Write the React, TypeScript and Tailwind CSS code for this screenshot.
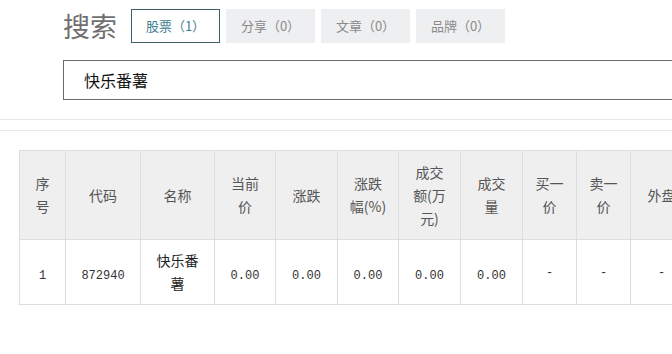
const cjk = { fontFamily: '"Noto Sans CJK SC", "Noto Sans", sans-serif' }
const mono = { fontFamily: '"Liberation Mono", "Noto Sans CJK SC", monospace' }

const tabs = [
  { label: '股票（1）', active: true },
  { label: '分享（0）', active: false },
  { label: '文章（0）', active: false },
  { label: '品牌（0）', active: false },
]

const cols = [46, 75, 74, 61, 62, 61, 62, 62, 54, 54, 62]

const heads: string[][] = [
  ['序', '号'],
  ['代码'],
  ['名称'],
  ['当前', '价'],
  ['涨跌'],
  ['涨跌', '幅(%)'],
  ['成交', '额(万', '元)'],
  ['成交', '量'],
  ['买一', '价'],
  ['卖一', '价'],
  ['外盘'],
]

const row = ['1', '872940', '快乐番薯', '0.00', '0.00', '0.00', '0.00', '0.00', '-', '-', '-']

function Tab({ label, active }: { label: string; active: boolean }) {
  return (
    <div
      className={
        active
          ? 'flex w-[89px] h-[34px] items-center justify-center border border-[#3f5f69] text-[#3f7f92] text-[13px]'
          : 'flex w-[89px] h-[34px] items-center justify-center bg-[#eeeff1] text-[#8a8a8a] text-[13px]'
      }>
      {label}
    </div>
  )
}

export default function App() {
  return (
    <div className="w-[672px] h-[354px] overflow-hidden bg-white" style={cjk}>
      <div className="flex items-center pl-[63px] pt-[9px] gap-[14px]">
        <h1 className="text-[27px] leading-[34px] text-[#6f6f6f]">搜索</h1>
        <div className="flex gap-[6px]">
          {tabs.map((t) => (
            <Tab key={t.label} {...t} />
          ))}
        </div>
      </div>

      <div className="pl-[63px] mt-[17px]">
        <div className="flex w-[700px] h-[40px] items-center border border-[#6a6a6a] pl-[20px] text-[16px] text-[#111]">
          快乐番薯
        </div>
      </div>

      <div className="mt-[19px] border-t border-[#e6e6e6] h-[11px]" />
      <div className="border-t border-[#e9e9e9]" />

      <div className="pl-[19px] pt-[19px]">
        <table className="table-fixed border-collapse w-[673px] text-center">
          <colgroup>
            {cols.map((w, i) => (
              <col key={i} style={{ width: w }} />
            ))}
          </colgroup>
          <thead>
            <tr className="h-[89px] bg-[#efeff0]">
              {heads.map((lines, i) => (
                <th key={i} className="border border-[#dddddd] font-normal text-[14px] leading-[23px] text-[#555] align-middle whitespace-nowrap">
                  {lines.map((l, j) => (
                    <div key={j}>{l}</div>
                  ))}
                </th>
              ))}
            </tr>
          </thead>
          <tbody>
            <tr className="h-[65px]">
              {row.map((v, i) => (
                <td key={i} className="border border-[#dddddd] align-middle text-[#333]">
                  {i === 2 ? (
                    <div className="text-[14px] leading-[23px] text-[#222]" style={cjk}>
                      <div>快乐番</div>
                      <div>薯</div>
                    </div>
                  ) : (
                    <span className={v === '-' ? 'relative -top-[3px] text-[12px]' : 'text-[12px]'} style={mono}>
                      {v}
                    </span>
                  )}
                </td>
              ))}
            </tr>
          </tbody>
        </table>
      </div>
    </div>
  )
}
